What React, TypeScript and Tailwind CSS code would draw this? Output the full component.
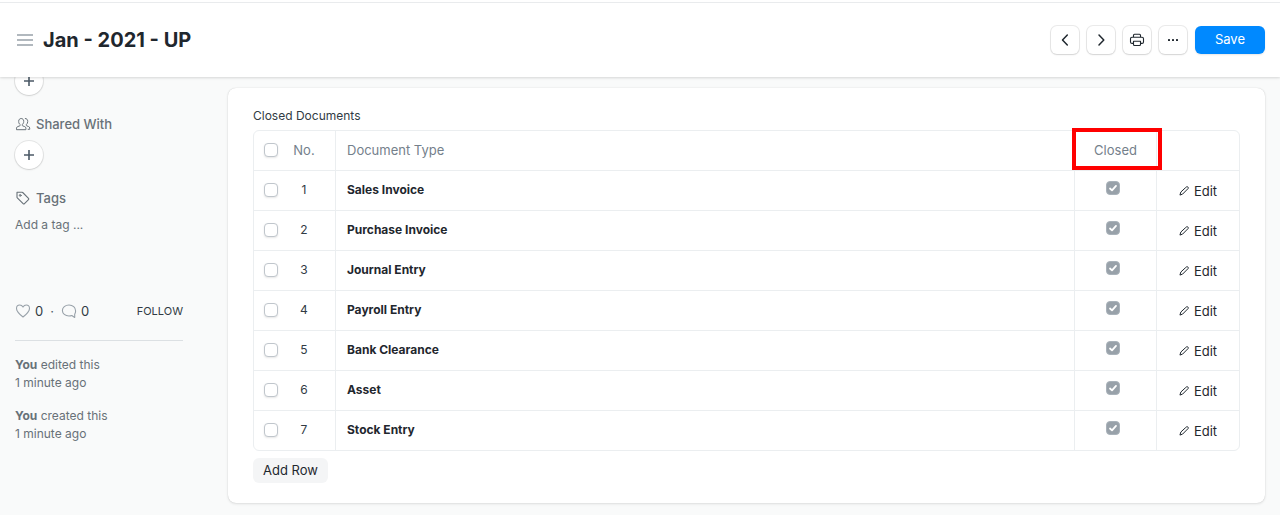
import type { ReactNode } from "react";

const documents = [
  "Sales Invoice",
  "Purchase Invoice",
  "Journal Entry",
  "Payroll Entry",
  "Bank Clearance",
  "Asset",
  "Stock Entry",
];

function Icon({ children, className }: { children: ReactNode; className: string }) {
  return (
    <svg
      viewBox="0 0 16 16"
      fill="none"
      stroke="currentColor"
      strokeLinecap="round"
      strokeLinejoin="round"
      aria-hidden="true"
      className={`shrink-0 ${className}`}
    >
      {children}
    </svg>
  );
}

function IconButton({ label, children }: { label: string; children: ReactNode }) {
  return (
    <button
      type="button"
      aria-label={label}
      className="flex size-7 items-center justify-center rounded-md bg-white text-[#1f272e] shadow-[0_0_0_1px_rgba(0,0,0,0.08),0_1px_2px_rgba(0,0,0,0.1)]"
    >
      {children}
    </button>
  );
}

function RoundAdd({ label }: { label: string }) {
  return (
    <button
      type="button"
      aria-label={label}
      className="flex size-7 items-center justify-center rounded-full bg-white text-[#4c5a67] shadow-[0_0_0_1px_rgba(0,0,0,0.08),0_1px_2px_rgba(0,0,0,0.1)]"
    >
      <Icon className="size-4">
        <path d="M8 3v10M3 8h10" strokeWidth="1.6" strokeLinecap="butt" />
      </Icon>
    </button>
  );
}

function SelectBox({ label }: { label: string }) {
  return (
    <input
      type="checkbox"
      aria-label={label}
      className="size-3.5 shrink-0 appearance-none rounded-[4px] border border-[#c0c6cc] bg-white shadow-[0_1px_2px_rgba(0,0,0,0.1)]"
    />
  );
}

function ClosedBox({ label }: { label: string }) {
  return (
    <span className="inline-grid size-3.5">
      <input
        type="checkbox"
        defaultChecked
        disabled
        aria-label={label}
        className="col-start-1 row-start-1 size-3.5 appearance-none rounded-[4px] border border-[#a9b2ba] bg-[#98a1a9]"
      />
      <svg
        viewBox="0 0 14 14"
        fill="none"
        stroke="white"
        strokeWidth="1.8"
        strokeLinecap="round"
        strokeLinejoin="round"
        aria-hidden="true"
        className="pointer-events-none z-0 col-start-1 row-start-1 size-3.5"
      >
        <path d="M4 7.5 6 9.4 10 4.9" />
      </svg>
    </span>
  );
}

function Header() {
  return (
    <header className="relative z-10 bg-white shadow-[0_1px_2px_rgba(0,0,0,0.1),0_1px_4px_rgba(0,0,0,0.05)]">
      <div className="h-[3px] border-b border-[#e9ebed]" />
      <div className="flex h-[74px] items-center justify-between px-[15px]">
        <div className="flex items-center gap-2">
          <button type="button" aria-label="Toggle sidebar" className="text-[#98a1a9]">
            <svg
              viewBox="0 0 20 20"
              fill="none"
              stroke="currentColor"
              strokeWidth="1.7"
              aria-hidden="true"
              className="size-5"
            >
              <path d="M2 5h16M2 10h16M2 15h16" />
            </svg>
          </button>
          <h1 className="text-xl leading-8 font-bold text-[#1f272e]">Jan - 2021 - UP</h1>
        </div>
        <div className="flex items-center gap-2">
          <IconButton label="Previous document">
            <Icon className="size-4">
              <path d="M10.3 3 5.500 8l4.800 5" strokeWidth="1.5" />
            </Icon>
          </IconButton>
          <IconButton label="Next document">
            <Icon className="size-4">
              <path d="m6 3 4.800 5L6 13" strokeWidth="1.5" />
            </Icon>
          </IconButton>
          <IconButton label="Print">
            <Icon className="size-4">
              <path
                d="M4.500 5V3.300a1 1 0 0 1 1-1h5a1 1 0 0 1 1 1V5M4.500 11.400H3a1.500 1.500 0 0 1-1.500-1.500V6.800A1.500 1.500 0 0 1 3 5.300h10a1.500 1.500 0 0 1 1.500 1.500v3.100a1.500 1.500 0 0 1-1.500 1.500h-1.500M4.500 9.200h7v3.300a1 1 0 0 1-1 1h-5a1 1 0 0 1-1-1z"
                strokeWidth="1.100"
              />
            </Icon>
          </IconButton>
          <IconButton label="Menu">
            <svg viewBox="0 0 16 16" fill="currentColor" aria-hidden="true" className="size-4">
              <rect x="3" y="7" width="2" height="2" rx="0.600" />
              <rect x="7" y="7" width="2" height="2" rx="0.600" />
              <rect x="11" y="7" width="2" height="2" rx="0.600" />
            </svg>
          </IconButton>
          <button
            type="button"
            className="h-7 rounded-md bg-[#0089ff] px-5 text-[13px] text-white shadow-[0_1px_2px_rgba(0,0,0,0.1)]"
          >
            Save
          </button>
        </div>
      </div>
    </header>
  );
}

function Sidebar() {
  return (
    <aside className="-mt-2.5 w-[168px] shrink-0 text-xs leading-[18px] text-[#687178]">
      <RoundAdd label="Add" />
      <h2 className="mt-5 mb-2 flex items-center gap-[5px] text-[13px] leading-[18px] font-medium">
        <Icon className="size-4">
          <path
            d="M1.500 13.300v-1.100c0-.8.500-1.400 1.200-1.600l1.900-.7c.4-.1.600-.4.600-.8v-.5C4.200 7.900 3.700 6.900 3.700 5.700v-.5C3.700 3.600 4.700 2.500 6.200 2.500s2.500 1.100 2.500 2.700v.5c0 1.200-.5 2.200-1.500 2.900v.5c0 .4.200.7.600.8l1.900.7c.7.2 1.200.8 1.200 1.600v1.100zM10.300 2.500c1.500 0 2.400 1.100 2.400 2.700v.5c0 1.200-.5 2.200-1.400 2.900v.5c0 .4.200.7.600.8l1.600.6c.7.200 1.200.8 1.200 1.600v1.200h-1.600"
            strokeWidth="1"
          />
        </Icon>
        Shared With
      </h2>
      <RoundAdd label="Share" />
      <h2 className="mt-5 mb-[9px] flex items-center gap-[5px] text-[13px] leading-[18px] font-medium">
        <Icon className="size-4">
          <path
            d="M2 2.500v4.700c0 .3.100.5.300.7l5.800 5.800a1 1 0 0 0 1.400 0l4-4a1 1 0 0 0 0-1.400L7.700 2.500a1 1 0 0 0-.7-.3H2.300z"
            strokeWidth="1.100"
          />
          <circle cx="5.200" cy="5.400" r="0.900" strokeWidth="1" />
        </Icon>
        Tags
      </h2>
      <button type="button" className="block">
        Add a tag ...
      </button>
      <div className="mt-[68px] flex items-center text-[13px] text-[#4c5a67]">
        <button type="button" aria-label="Likes" className="flex items-center gap-1">
          <Icon className="size-4 text-[#98a1a9]">
            <path
              d="M8 4.100C7 2.300 5.700 2 4.700 2 2.800 2 1.500 3.500 1.500 5.400c0 3.300 3.500 6.200 6.500 8.600 3-2.400 6.500-5.300 6.500-8.600C14.500 3.500 13.200 2 11.300 2 10.300 2 9 2.300 8 4.100z"
              strokeWidth="1.100"
            />
          </Icon>
          <span className="text-[#313b44]">0</span>
        </button>
        <span className="mx-[7px]">·</span>
        <button type="button" aria-label="Comments" className="flex items-center gap-1">
          <Icon className="size-4 text-[#98a1a9]">
            <path
              d="M13.700 14.500V11.200A6 6 0 0 0 14.600 7.900C14.600 4.500 11.800 2 8 2S1.400 4.500 1.400 7.500 4.200 13 8 13c1 0 2-.2 2.800-.5z"
              strokeWidth="1.100"
            />
          </Icon>
          <span className="text-[#313b44]">0</span>
        </button>
        <button type="button" className="ml-auto text-[11px] text-[#313b44]">
          FOLLOW
        </button>
      </div>
      <hr className="mt-5 mb-[15px] border-[#dce0e3]" />
      <p>
        <strong className="font-bold">You</strong> edited this
        <br />1 minute ago
      </p>
      <p className="mt-[15px]">
        <strong className="font-bold">You</strong> created this
        <br />1 minute ago
      </p>
    </aside>
  );
}

function DocumentTable() {
  return (
    <table
      aria-labelledby="closed-documents"
      className="w-full table-fixed border-separate border-spacing-0 rounded-md border border-[#ebeef0] text-[13px] leading-5"
    >
      <colgroup>
        <col className="w-[82px]" />
        <col />
        <col className="w-[82px]" />
        <col className="w-[82px]" />
      </colgroup>
      <thead>
        <tr className="text-[#74808b]">
          <th scope="col" className="h-[39px] border-r border-[#ebeef0] p-0 pb-px font-normal">
            <div className="flex items-center pl-2.5">
              <SelectBox label="Select all rows" />
              <span className="w-[52px] text-center">No.</span>
            </div>
          </th>
          <th
            scope="col"
            className="border-r border-[#ebeef0] p-0 pb-px pl-[11px] text-left font-normal"
          >
            Document Type
          </th>
          <th scope="col" className="relative border-r border-[#ebeef0] p-0 pb-px font-normal">
            Closed
            <span className="pointer-events-none absolute -top-[3px] -right-1.5 bottom-0 -left-[3px] border-4 border-[#ff0000]" />
          </th>
          <th aria-label="Actions" className="p-0" />
        </tr>
      </thead>
      <tbody className="text-[#1f272e]">
        {documents.map((name, i) => (
          <tr key={name}>
            <td className="h-10 border-t border-r border-[#ebeef0] p-0 pb-0.5">
              <div className="flex items-center pl-2.5">
                <SelectBox label={`Select row ${i + 1}`} />
                <span className="w-[52px] text-center text-xs leading-5 text-[#313b44]">
                  {i + 1}
                </span>
              </div>
            </td>
            <td className="border-t border-r border-[#ebeef0] p-0 pb-0.5 pl-[11px] text-xs font-bold">
              {name}
            </td>
            <td className="border-t border-r border-[#ebeef0] p-0 pr-1.5 pb-1.5">
              <div className="flex justify-center">
                <ClosedBox label={`${name} closed`} />
              </div>
            </td>
            <td className="border-t border-[#ebeef0] p-0">
              <button type="button" className="mx-auto flex items-center gap-[5px]">
                <Icon className="size-2.5">
                  <path
                    d="M10.600 2.600 12 1.400a1.900 1.900 0 0 1 2.600 2.600L5.700 13 1.500 14.500l1.300-4.300z"
                    strokeWidth="1.600"
                  />
                </Icon>
                Edit
              </button>
            </td>
          </tr>
        ))}
      </tbody>
    </table>
  );
}

export default function App() {
  return (
    <div className="min-h-screen bg-[#f9fafa] font-['Inter','Liberation_Sans',sans-serif]">
      <Header />
      <div className="flex items-start gap-[45px] px-[15px] pb-3">
        <Sidebar />
        <main className="mt-[11px] min-w-0 flex-1 rounded-lg bg-white px-[25px] pt-[19px] pb-5 shadow-[0_0_1px_rgba(0,0,0,0.2),0_1px_3px_rgba(0,0,0,0.1)]">
          <h2 id="closed-documents" className="mb-[5px] text-xs leading-[18px] text-[#313b44]">
            Closed Documents
          </h2>
          <DocumentTable />
          <button
            type="button"
            className="mt-[7px] block h-[25px] rounded-md bg-[#f4f5f6] px-2.5 text-[13px] text-[#1f272e]"
          >
            Add Row
          </button>
        </main>
      </div>
    </div>
  );
}
